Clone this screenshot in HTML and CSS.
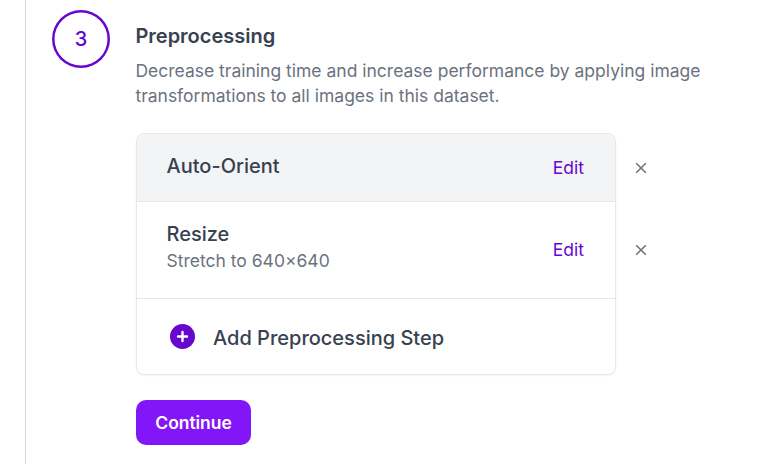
FILE: index.html
```html
<!DOCTYPE html>
<html lang="en">
<head>
<meta charset="utf-8">
<title>Preprocessing</title>
<link rel="stylesheet" href="styles.css">
</head>
<body>
<main class="step">
  <div class="badge">3</div>
  <section class="content">
    <h2 class="title">Preprocessing</h2>
    <p class="description">Decrease training time and increase performance by applying image transformations to all images in this dataset.</p>
    <div class="panel">
      <div class="card">
        <div class="row row-orient"><div class="details"><div class="name">Auto-Orient</div></div><a class="edit">Edit</a></div>
        <div class="row row-resize">
          <div class="details"><div class="name">Resize</div><div class="detail">Stretch to 640×640</div></div>
          <a class="edit">Edit</a>
        </div>
        <div class="row row-add">
          <svg class="plus" viewBox="0 0 25 25"><circle cx="12.5" cy="12.5" r="12.5" fill="#6706ce"/><path d="M12.5 8v9M8 12.5h9" stroke="#fff" stroke-width="2.4" stroke-linecap="round"/></svg>
          <span class="add">Add Preprocessing Step</span>
        </div>
      </div>
      <div class="removes">
        <svg class="remove" viewBox="0 0 12 12"><path d="M1.2 1.2l9.6 9.6M10.8 1.2l-9.6 9.6"/></svg>
        <svg class="remove" viewBox="0 0 12 12"><path d="M1.2 1.2l9.6 9.6M10.8 1.2l-9.6 9.6"/></svg>
      </div>
    </div>
    <button class="continue">Continue</button>
  </section>
</main>
</body>
</html>
```
FILE: styles.css
```css
* { box-sizing: border-box; }
body { margin: 0; background: #fff; font-family: Inter, sans-serif; color: #374151; }
.step { height: 464px; margin-left: 25px; padding: 10px 0 0 26px; border-left: 1px solid #d1d5db; display: flex; gap: 26px; overflow: hidden; }
.badge { width: 58px; height: 58px; flex: none; box-shadow: inset 0 0 0 2.5px #6706ce; border-radius: 50%; color: #6706ce; display: flex; align-items: center; justify-content: center; font-size: 20px; font-weight: 500; }
.content { width: 600px; padding-top: 11px; }
.title { margin: 0 0 0 -0.6px; font-size: 20px; line-height: 30px; font-weight: 600; }
.description { margin: 7px 0 0 -0.6px; font-size: 17.5px; line-height: 25px; color: #6b7280; }
.panel { display: flex; margin-top: 25px; }
.card { width: 480px; height: 242px; border: 1px solid #e5e7eb; border-radius: 8px; overflow: hidden; box-shadow: 0 1px 2px #0000000d; }
.row { display: flex; align-items: center; padding: 0 31px 0 29.5px; }
.row-orient { height: 67px; background: #f3f4f6; justify-content: space-between; }
.row-orient .details { padding-bottom: 4px; }
.row-resize { height: 97px; border-top: 1px solid #e5e7eb; justify-content: space-between; }
.row-resize .details { padding-bottom: 7px; }
.row-resize .edit { padding-bottom: 2px; }
.row-add { height: 76px; border-top: 1px solid #e5e7eb; }
.name { font-size: 20px; line-height: 28px; font-weight: 500; }
.detail { font-size: 17.5px; line-height: 25px; color: #6b7280; }
.edit { font-size: 17.5px; line-height: 25px; color: #6706ce; }
.plus { width: 25px; height: 25px; margin: 0 18px 1px 3.5px; }
.add { padding-top: 2px; font-size: 20px; font-weight: 500; }
.removes { padding: 29px 0 0 19px; display: flex; flex-direction: column; gap: 70px; }
.remove { width: 12px; height: 12px; fill: none; stroke: #6b7280; stroke-width: 1.6; }
.continue { display: block; width: 115px; height: 45px; margin-top: 25px; padding: 0; border: 0; border-radius: 10px; background: #8315f9; color: #fff; font: 600 17.5px/25px Inter, sans-serif; letter-spacing: -0.05px; }
```
